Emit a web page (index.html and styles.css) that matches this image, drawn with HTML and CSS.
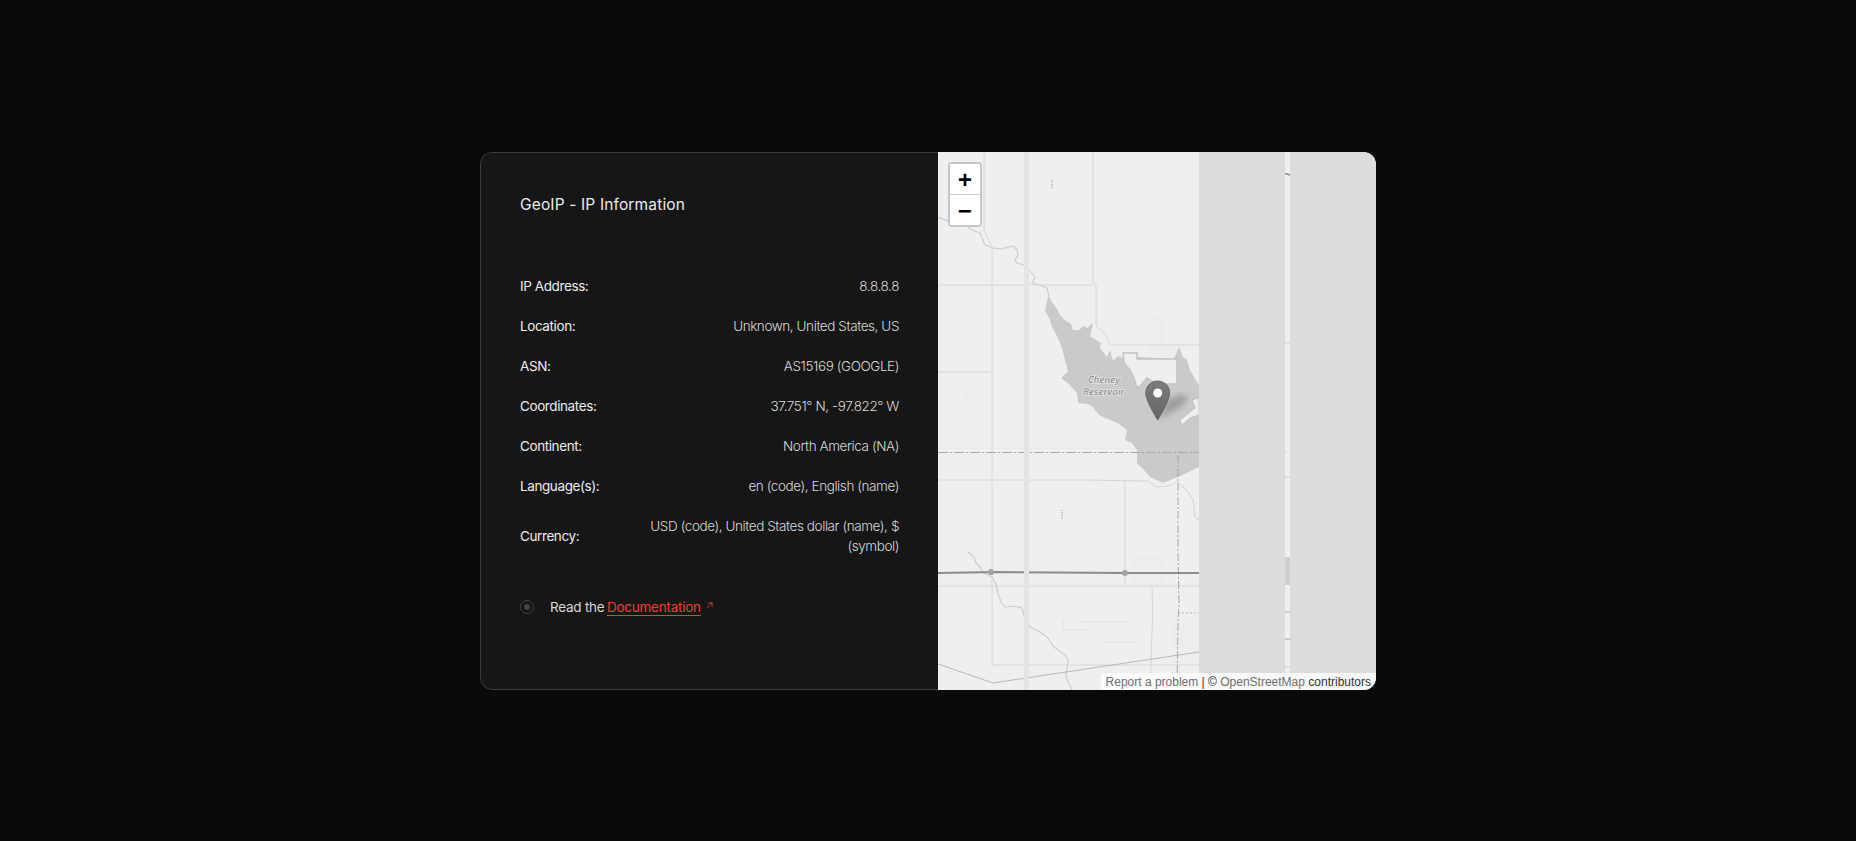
FILE: index.html
```html
<!DOCTYPE html>
<html lang="en">
<head>
  <meta charset="UTF-8">
  <meta name="viewport" content="width=device-width, initial-scale=1.0">
  <title>GeoIP - IP Information</title>
  <link rel="stylesheet" href="styles.css">
</head>
<body>
  <main class="card">
    <section class="info">
      <h1 class="title">GeoIP - IP Information</h1>
      <dl class="rows">
        <div class="row"><dt>IP Address:</dt><dd>8.8.8.8</dd></div>
        <div class="row"><dt>Location:</dt><dd>Unknown, United States, US</dd></div>
        <div class="row"><dt>ASN:</dt><dd>AS15169 (GOOGLE)</dd></div>
        <div class="row"><dt>Coordinates:</dt><dd>37.751° N, -97.822° W</dd></div>
        <div class="row"><dt>Continent:</dt><dd>North America (NA)</dd></div>
        <div class="row"><dt>Language(s):</dt><dd>en (code), English (name)</dd></div>
        <div class="row"><dt>Currency:</dt><dd>USD (code), United States dollar (name), $ (symbol)</dd></div>
      </dl>
      <p class="docs">
        <span class="radio"></span>
        <span>Read the <a class="docs-link" href="#">Documentation</a></span>
        <svg class="arrow" viewBox="0 0 8 8" width="7" height="7"><path d="M1 7 7 1M2.5 1H7V5.5" fill="none" stroke="currentColor" stroke-width="0.9"/></svg>
      </p>
    </section>

    <section class="map">
      <svg class="map-canvas" viewBox="0 0 438 538" width="438" height="538">
        <defs>
          <filter id="blur"><feGaussianBlur stdDeviation="3"/></filter>
          <linearGradient id="pin" x1="0" y1="0" x2="0" y2="1">
            <stop offset="0" stop-color="#7c7c7c"/>
            <stop offset="1" stop-color="#656565"/>
          </linearGradient>
        </defs>
        <rect width="438" height="538" fill="#efefef"/>

        <!-- faint land patches -->
        <path d="M212 165h14v28h-14zM210 193h27v14h-27z" fill="#ededed"/>
        <circle cx="32" cy="241" r="8" fill="#ededed"/>
        <path d="M195 405h30v30h-30zM235 470h26v40h-26z" fill="#ededed"/>

        <!-- lines -->
        <g fill="none" stroke="#d6d6d6" stroke-width="1">
          <path d="M46 0V78L54 95V513H261"/>
          <path d="M155 0V131L158 133V171C160 180 168 178 172 193H261"/>
          <path d="M0 133H155"/>
          <path d="M0 220H52"/>
          <path d="M0 328H150L210 329 218 335 232 334 240 329"/>
          <path d="M187 329V434"/>
          <path d="M0 434H261"/>
          <path d="M214 435C216 470 212 500 213 538"/>
          <path d="M240 330C250 340 256 345 256 355S258 368 261 367" stroke="#cfcfcf"/>
        </g>
        <path d="M142 470H190M165 490H200M125 468V478H150" fill="none" stroke="#e2e2e2"/>
        <g fill="none" stroke="#cdcdcd" stroke-width="1.2" stroke-linejoin="round">
          <path d="M0 65 12 70 25 71 34 78 42 81 45 88 47 93 55 96 64 97 70 95 75 94 79 98 80 103 77 108 79 111 86 113 90 116 93 120 97 125 94 131 102 133 109 136 112 148"/>
          <path d="M30 400 36 405 38 411 42 415 46 421 54 425 58 432 60 441 63 450 67 455 76 454 84 456 87 467 92 475 102 480 110 486 115 494 120 498 127 503 130 508 129 516 128 525 134 538"/>
        </g>
        <path d="M0 512 55 531 261 500" fill="none" stroke="#a9a9a9" stroke-width="0.8"/>

        <!-- reservoir -->
        <path d="M110 145 107 158 112 168 114 175 119 184 122 191 125 200 127 208 130 220 123 226 131 232 139 241 140 251 150 252 155 255 160 262 165 265 172 268 181 272 189 278 187 288 194 291 199 298 199 311 207 319 212 325 225 331 240 325 261 315V233L252 218 249 208 245 205 241 195 236 207 199 205 190 208 180 204 175 209 172 198 169 205 162 196 163 191 155 186 152 185 155 171 149 176 146 174 141 178 135 178 133 172 127 168 122 163 117 154Z" fill="#cacaca"/>
        <path d="M185 201H199V207H239V232H225L214 229 209 226 203 233 199 236 196 226 192 218 186 211Z" fill="#efefef" stroke="#c4c4c4" stroke-width="1.5"/>
        <path d="M250 207H261V233L252 218Z" fill="#efefef"/>
        <path d="M261 246 254 248 257 256 242 268 244 273 252 266 261 263Z" fill="#efefef" stroke="#b9b9b9" stroke-width="0.8"/>

        <!-- roads, stripes and boundaries -->
        <path d="M0 300.5H261" fill="none" stroke="#a8a8a8" stroke-width="1" stroke-dasharray="10 2 2 2"/>
        <path d="M240 303V400L241 450 240 470 239 538" fill="none" stroke="#a4a4a4" stroke-width="1" stroke-dasharray="8 2 2 2"/>
        <path d="M240 461H261" fill="none" stroke="#b5b5b5" stroke-width="1" stroke-dasharray="2 2"/>
        <path d="M0 421 60 420 187 421H261" fill="none" stroke="#8c8c8c" stroke-width="2"/>
        <circle cx="53" cy="420" r="3" fill="#a3a3a3"/>
        <circle cx="187" cy="421" r="3" fill="#a3a3a3"/>
        <path d="M114 28V38M124 358V367" stroke="#c4c4c4" stroke-width="2" stroke-dasharray="1 1"/>
        <rect x="86" width="5" height="538" fill="#e4e4e4"/>

        <!-- map label -->
        <text class="map-label" x="166" y="231" text-anchor="middle">Cheney</text>
        <text class="map-label" x="166" y="243" text-anchor="middle">Reservoir</text>

        <!-- tiles that have not loaded -->
        <rect x="261" width="86" height="538" fill="#dcdcdc"/>
        <rect x="352" width="86" height="538" fill="#dcdcdc"/>
        <g stroke="#cdcdcd" stroke-width="1" fill="none">
          <path d="M347 191H352M347 325H352M347 515H352"/>
          <path d="M347 300H352" stroke-dasharray="1 1"/>
          <path d="M347 460H352M347 487H352" stroke="#a8a8a8"/>
        </g>
        <path d="M347 21.5 352 23" stroke="#8e8e8e" stroke-width="1.5"/>
        <rect x="347" y="405" width="5" height="28" fill="#cfcfcf"/>

        <!-- marker and its shadow -->
        <path d="M221 268 246 252C252 246 248 242 240 243L230 248Z" fill="#555" opacity="0.4" filter="url(#blur)"/>
        <path d="M219.7 229C213 229 207.7 234.4 207.7 241 207.7 249 219.7 268 219.7 268S231.7 249 231.7 241C231.7 234.4 226.4 229 219.7 229Z" fill="url(#pin)" stroke="#5c5c5c" stroke-width="0.8"/>
        <circle cx="219.7" cy="241" r="4.5" fill="#fff"/>
      </svg>

      <div class="zoom">
        <a class="zoom-btn" href="#">+</a>
        <a class="zoom-btn" href="#">−</a>
      </div>
      <div class="attribution"><span class="attr-link">Report a problem</span> | © <span class="attr-link">OpenStreetMap</span> contributors</div>
    </section>
  </main>
</body>
</html>
```

FILE: styles.css
```css
/* colours */
:root {
  --bg-color: #0a0a0a;
  --panel-bg: #161616;
  --panel-border: #3c3c3c;
  --label-color: #ededed;
  --value-color: #dadada;
  --accent: #fb3a2e;
}

html, body {
  height: 100%;
}

body {
  margin: 0;
  display: flex;
  align-items: center;
  justify-content: center;
  background-color: var(--bg-color);
  font-family: Inter, "Noto Sans", sans-serif;
  font-size: 13.5px;
  line-height: 20px;
  letter-spacing: -0.25px;
  overflow: hidden;
}

/* card */
.card {
  display: flex;
  width: 896px;
  height: 538px;
  border-radius: 12px;
  overflow: hidden;
}

/* left panel */
.info {
  box-sizing: border-box;
  width: 458px;
  padding: 40px 39px 0 39px;
  background-color: var(--panel-bg);
  border: 1px solid var(--panel-border);
  border-right: none;
  border-radius: 12px 0 0 12px;
}

.title {
  margin: 0;
  height: 24px;
  color: #ececec;
  font-size: 15.5px;
  font-weight: 400;
  letter-spacing: 0.15px;
  line-height: 24px;
}

.rows {
  margin: 59px 0 0 0;
  display: flex;
  flex-direction: column;
  gap: 20px;
}

.row {
  display: flex;
  align-items: center;
  justify-content: space-between;
  gap: 20px;
}

.row dt {
  color: var(--label-color);
  letter-spacing: -0.4px;
  white-space: nowrap;
}

.row dd {
  margin: 0;
  max-width: 262px;
  color: var(--value-color);
  font-weight: 300;
  letter-spacing: -0.42px;
  text-align: right;
}

.docs {
  margin: 41px 0 0 0;
  display: flex;
  align-items: center;
  color: #d6d6d6;
}

.radio {
  box-sizing: border-box;
  display: flex;
  align-items: center;
  justify-content: center;
  width: 14px;
  height: 14px;
  margin-right: 16px;
  border: 1px solid #444;
  border-radius: 50%;
}

.radio::after {
  content: "";
  width: 6px;
  height: 6px;
  border-radius: 50%;
  background-color: #444;
}

.docs-link {
  margin-left: -1px;
  color: var(--accent);
  text-decoration: none;
  border-bottom: 1px solid var(--accent);
}

.arrow {
  margin: -2px 0 0 5px;
  color: var(--accent);
}

/* map */
.map {
  position: relative;
  width: 438px;
  height: 538px;
  overflow: hidden;
  border-radius: 0 12px 12px 0;
  letter-spacing: normal;
}

.map-canvas {
  display: block;
}

.map-label {
  fill: #7d7d7d;
  font-family: "Open Sans", sans-serif;
  font-size: 9.5px;
  font-style: italic;
  letter-spacing: 0.3px;
  paint-order: stroke;
  stroke: #e6e6e6;
  stroke-width: 1.5px;
}

.zoom {
  position: absolute;
  top: 10px;
  left: 10px;
  display: flex;
  flex-direction: column;
  border: 2px solid #c6c6c6;
  border-radius: 4px;
}

.zoom-btn {
  display: block;
  width: 30px;
  height: 30px;
  background-color: #fff;
  color: #000;
  font-family: "Liberation Mono", monospace;
  font-size: 24px;
  font-weight: bold;
  line-height: 36px;
  text-align: center;
  text-decoration: none;
}

.zoom-btn + .zoom-btn {
  border-top: 1px solid #ccc;
}

.attribution {
  position: absolute;
  right: 0;
  bottom: 0;
  padding: 1px 5px 0;
  background-color: rgba(255, 255, 255, 0.8);
  color: #333;
  font-family: "Liberation Sans", Arial, sans-serif;
  font-size: 12px;
  line-height: 16px;
}

.attr-link {
  color: #6e6e6e;
}
```
